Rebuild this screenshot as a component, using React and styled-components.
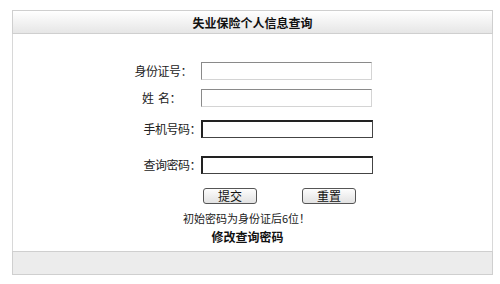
import React from 'react'
import styled, { createGlobalStyle } from 'styled-components'

const GlobalStyle = createGlobalStyle`
  body {
    margin: 0;
    background: #ffffff;
    font-family: "Noto Sans CJK SC", "DejaVu Sans", sans-serif;
    font-size: 12px;
    color: #222;
  }
`

const Page = styled.div`
  padding: 10px 7px 10px 12px;
`

const Panel = styled.div`
  width: 481px;
  display: flex;
  flex-direction: column;
`

const Header = styled.div`
  height: 22px;
  border: 1px solid #cfcfcf;
  background: linear-gradient(#ffffff, #e6e6e6);
  display: flex;
  align-items: center;
  justify-content: center;
  font-weight: bold;
  font-size: 12px;
  color: #111;
`

const Body = styled.div`
  border-left: 1px solid #d8d8d8;
  border-right: 1px solid #d8d8d8;
  padding: 28px 0 10px;
  height: 179px;
`

const Form = styled.div`
  display: grid;
  grid-template-columns: 188px 172px;
`

const Label = styled.div`
  margin-top: ${p => p.$mt || 0}px;
  padding-right: ${p => p.$pr}px;
  text-align: right;
  line-height: 18px;
  letter-spacing: -0.5px;
  color: #222;
`

const Field = styled.input`
  margin: ${p => p.$mt || 0}px 0 0;
  box-sizing: border-box;
  width: ${p => (p.$dark ? 172 : 171)}px;
  height: 18px;
  padding: 0;
  background: #fff;
  border: 1px solid;
  border-color: ${p => (p.$dark ? '#222 #444 #444 #222' : '#8a8a8a #d4d4d4 #d4d4d4 #8a8a8a')};
  border-width: ${p => (p.$dark ? '2px 1px 1px 2px' : '1px')};
  outline: none;
`

const Buttons = styled.div`
  grid-column: 2;
  margin: 14px 0 0 2px;
  display: flex;
  gap: 45px;
`

const Button = styled.button`
  width: 54px;
  height: 16px;
  padding: 0;
  font-family: inherit;
  font-size: 12px;
  line-height: 14px;
  color: #111;
  border: 1px solid #555;
  border-radius: 3px;
  background: linear-gradient(#fdfdfd, #e2e2e2);
`

const Hint = styled.div`
  margin-top: 5px;
  padding-right: 12px;
  text-align: center;
  font-size: 11px;
  line-height: 18px;
  color: #222;
`

const Link = styled.div`
  padding-right: 10px;
  text-align: center;
  font-weight: bold;
  line-height: 20px;
  color: #111;
`

const Footer = styled.div`
  height: 22px;
  border: 1px solid #cfcfcf;
  background: #ececec;
`

const rows = [
  { label: '身份证号：', pr: 9, mt: 0 },
  { label: '姓\u00a0\u00a0名：', pr: 20, mt: 9 },
  { label: '手机号码：', pr: -3, mt: 13, dark: true },
  { label: '查询密码：', pr: -3, mt: 18, dark: true },
]

export default function App() {
  return (
    <Page>
      <GlobalStyle />
      <Panel>
        <Header>失业保险个人信息查询</Header>
        <Body>
          <Form>
            {rows.map(r => (
              <React.Fragment key={r.label}>
                <Label $mt={r.mt} $pr={r.pr}>{r.label}</Label>
                <Field $mt={r.mt} $dark={r.dark} />
              </React.Fragment>
            ))}
            <Buttons>
              <Button>提交</Button>
              <Button>重置</Button>
            </Buttons>
          </Form>
          <Hint>初始密码为身份证后6位！</Hint>
          <Link>修改查询密码</Link>
        </Body>
        <Footer />
      </Panel>
    </Page>
  )
}
